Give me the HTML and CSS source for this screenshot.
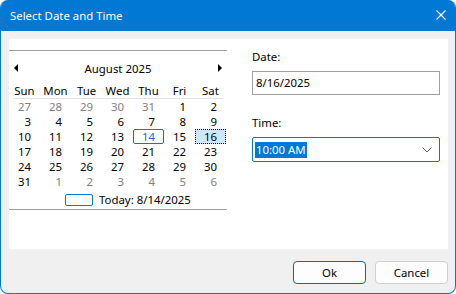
FILE: index.html
```html
<!DOCTYPE html>
<html lang="en">
<head>
    <meta charset="UTF-8">
    <title>Select Date and Time</title>
    <link rel="stylesheet" href="styles.css">
</head>
<body>
    <div class="window">
        <div class="titlebar">
            <span class="title">Select Date and Time</span>
            <svg class="close" width="10" height="10" viewBox="0 0 10 10">
                <path d="M0.5 0.5 L9.5 9.5 M9.5 0.5 L0.5 9.5" stroke="#fff" stroke-width="1.1" fill="none"/>
            </svg>
        </div>

        <div class="content">
            <div class="panel">
                <div class="calendar">
                    <div class="cal-head">
                        <span class="arrow arrow-left"></span>
                        <span class="month">August 2025</span>
                        <span class="arrow arrow-right"></span>
                    </div>
                    <div class="cal-names">
                        <span>Sun</span><span>Mon</span><span>Tue</span><span>Wed</span><span>Thu</span><span>Fri</span><span>Sat</span>
                    </div>
                    <div class="cal-sep"></div>
                    <div class="cal-grid">
                        <span class="other">27</span><span class="other">28</span><span class="other">29</span><span class="other">30</span><span class="other">31</span><span>1</span><span>2</span>
                        <span>3</span><span>4</span><span>5</span><span>6</span><span>7</span><span>8</span><span>9</span>
                        <span>10</span><span>11</span><span>12</span><span>13</span><span class="today">14</span><span>15</span><span class="selected">16</span>
                        <span>17</span><span>18</span><span>19</span><span>20</span><span>21</span><span>22</span><span>23</span>
                        <span>24</span><span>25</span><span>26</span><span>27</span><span>28</span><span>29</span><span>30</span>
                        <span>31</span><span class="other">1</span><span class="other">2</span><span class="other">3</span><span class="other">4</span><span class="other">5</span><span class="other">6</span>
                    </div>
                    <div class="cal-today">
                        <span class="today-box"></span>
                        <span>Today: 8/14/2025</span>
                    </div>
                </div>

                <div class="side">
                    <label class="field-label">Date:</label>
                    <div class="textbox">8/16/2025</div>

                    <label class="field-label time-label">Time:</label>
                    <div class="combo">
                        <span class="combo-text">10:00 AM</span>
                        <svg class="chevron" width="10" height="6" viewBox="0 0 10 6">
                            <path d="M0.5 0.5 L5 5 L9.5 0.5" stroke="#606060" stroke-width="1" fill="none"/>
                        </svg>
                    </div>
                </div>
            </div>

            <div class="buttons">
                <button class="btn btn-default">Ok</button>
                <button class="btn">Cancel</button>
            </div>
        </div>
    </div>
</body>
</html>
```

FILE: styles.css
```css
* {
    margin: 0;
    padding: 0;
    box-sizing: border-box;
}

body {
    background-color: #fff;
    font-family: "Noto Sans", "Open Sans", sans-serif;
    font-size: 11.4px;
    color: #000;
}

.window {
    width: 456px;
    height: 294px;
    border: 1px solid #0078d4;
    border-top: none;
    border-radius: 8px;
    overflow: hidden;
    background-color: #f0f0f0;
}

.titlebar {
    height: 31px;
    background-color: #0078d4;
    display: flex;
    align-items: center;
    padding-left: 9px;
    padding-right: 9px;
    color: #fff;
}

.title {
    flex: 1;
}

.close {
    display: block;
    margin-top: -2px;
}

.content {
    padding: 8px 7px 0 8px;
}

.panel {
    height: 210px;
    background-color: #fff;
    display: flex;
    padding-top: 11px;
}

.calendar {
    width: 218px;
    height: 160px;
    border-top: 1px solid #a0a0a0;
    border-bottom: 1px solid #a0a0a0;
}

.cal-head {
    height: 33px;
    display: flex;
    align-items: center;
    justify-content: space-between;
    padding: 0 5px;
}

.month {
    margin-top: 1px;
}

.arrow {
    width: 0;
    height: 0;
    border-top: 4px solid transparent;
    border-bottom: 4px solid transparent;
}

.arrow-left {
    border-right: 4px solid #000;
}

.arrow-right {
    border-left: 4px solid #000;
}

.cal-names {
    display: grid;
    grid-template-columns: repeat(7, 31px);
    height: 14px;
    line-height: 14px;
    text-align: center;
}

.cal-sep {
    height: 1px;
    margin: 0 4px;
    background-color: #e3e3e3;
}

.cal-grid {
    display: grid;
    grid-template-columns: repeat(7, 31px);
    grid-auto-rows: 15px;
    line-height: 15px;
    text-align: right;
}

.cal-grid span {
    padding-right: 9px;
}

.cal-grid .other {
    color: #808080;
}

.cal-grid .today {
    border: 1px solid #0078d4;
    border-radius: 2px;
    color: #3c5ad8;
    padding-right: 8px;
    line-height: 13px;
}

.cal-grid .selected {
    background-color: #cce8ff;
    border: 1px dotted #000;
    padding-right: 8px;
    line-height: 13px;
}

.cal-today {
    display: flex;
    align-items: center;
    height: 19px;
    padding-left: 56px;
    padding-top: 2px;
}

.today-box {
    width: 28px;
    height: 12px;
    border: 1px solid #0078d4;
    border-radius: 2px;
    margin-right: 6px;
}

.side {
    margin-left: 25px;
    width: 188px;
    margin-top: -2px;
}

.field-label {
    display: block;
    height: 23px;
    line-height: 17px;
}

.textbox {
    height: 24px;
    border: 1px solid #a0a0a0;
    padding-left: 3px;
    line-height: 21px;
}

.time-label {
    margin-top: 19px;
    height: 23px;
}

.combo {
    height: 25px;
    border: 1px solid #0078d4;
    border-radius: 2px;
    display: flex;
    align-items: center;
    justify-content: space-between;
    padding-left: 2px;
    padding-right: 7px;
}

.combo-text {
    background-color: #0078d7;
    color: #fff;
    padding: 0 1px;
    line-height: 16px;
}

.buttons {
    display: flex;
    justify-content: flex-end;
    gap: 9px;
    margin-top: 12px;
}

.btn {
    width: 73px;
    height: 23px;
    font-family: "Noto Sans", "Open Sans", sans-serif;
    font-size: 11.4px;
    color: #000;
    background-color: #fdfdfd;
    border: 1px solid #d0d0d0;
    border-radius: 4px;
}

.btn-default {
    border-color: #0067c0;
}
```
